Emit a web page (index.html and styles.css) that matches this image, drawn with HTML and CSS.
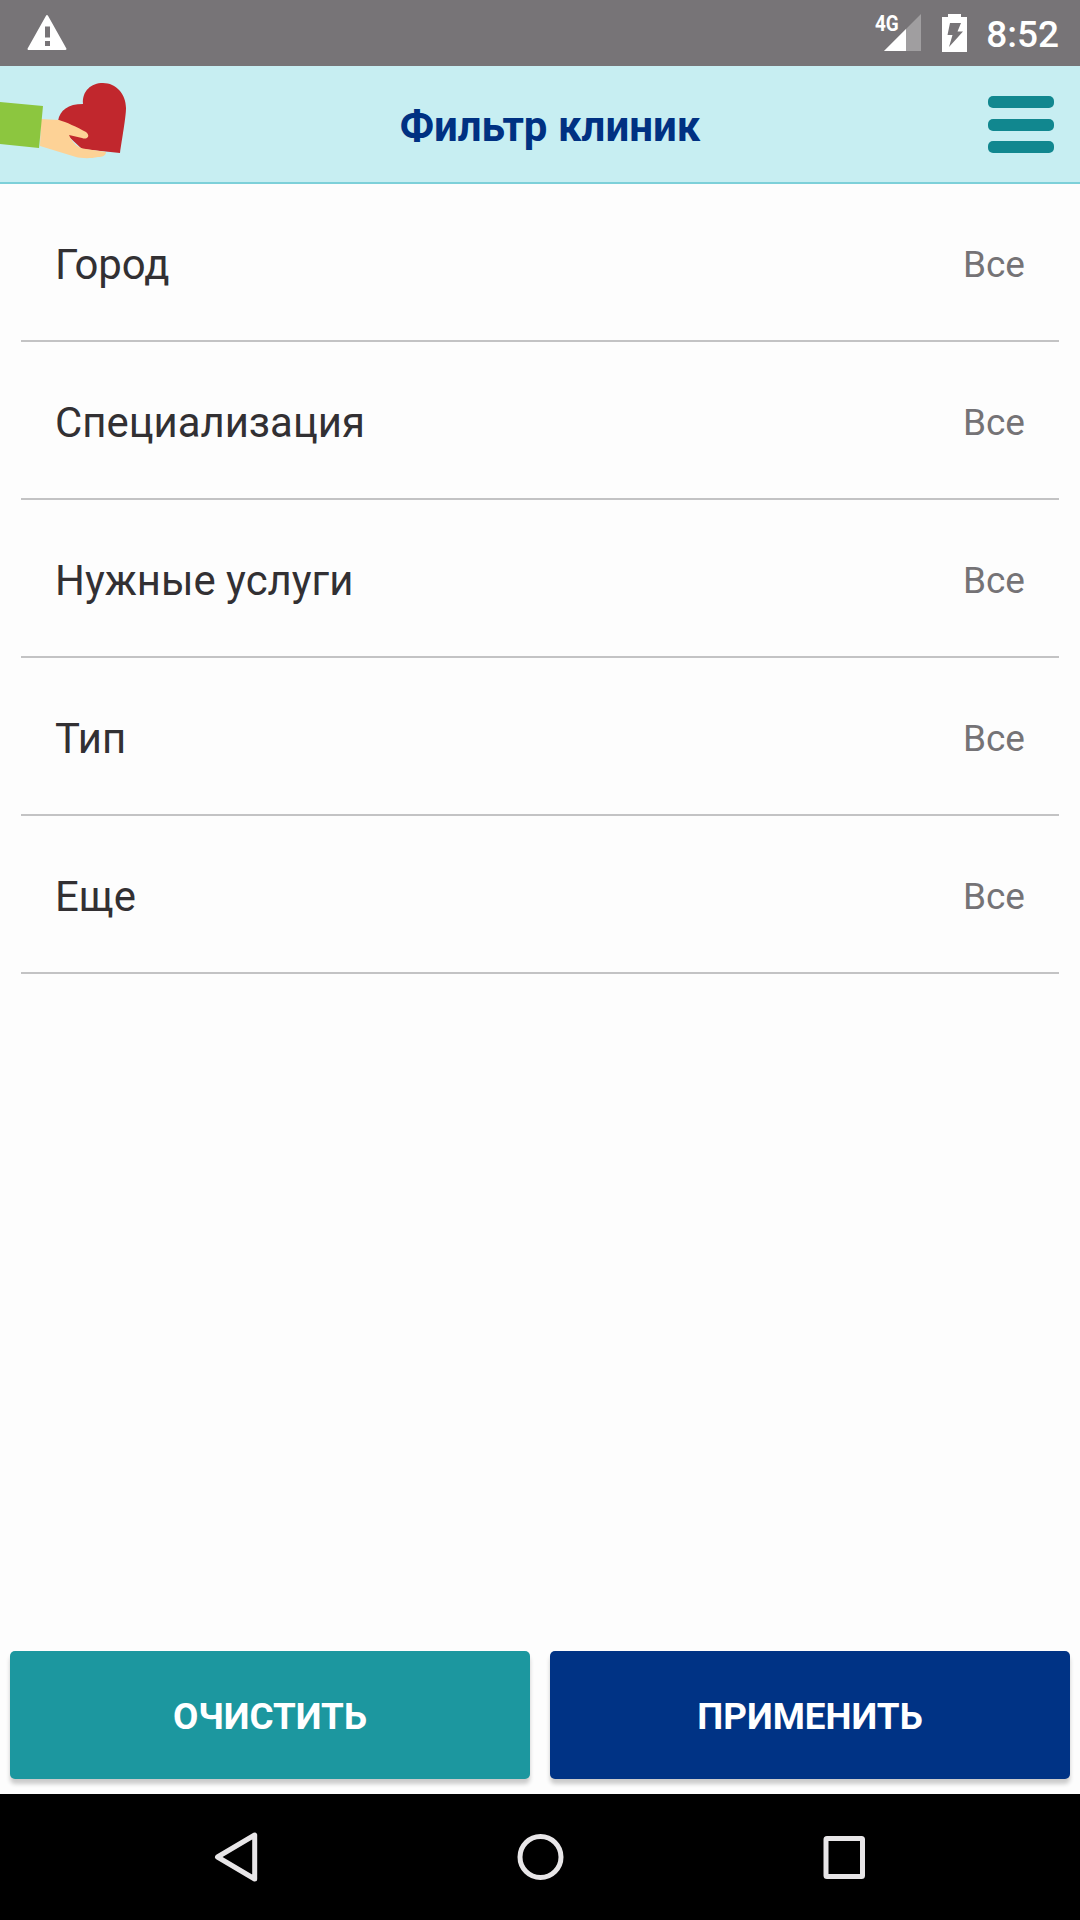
FILE: index.html
```html
<!DOCTYPE html>
<html lang="ru">
<head>
    <meta charset="UTF-8">
    <meta name="viewport" content="width=device-width, initial-scale=1.0">
    <title>Фильтр клиник</title>
    <link rel="stylesheet" href="styles.css">
</head>
<body>
    <div class="screen">
        <div class="status-bar">
            <svg class="status-warning" width="40" height="37" viewBox="0 0 40 37">
                <path d="M20 2L38.500 35H1.500z" fill="#fff" stroke="#fff" stroke-width="2" stroke-linejoin="round"/>
                <path d="M18 12.500h5v11h-5zM18 27h5v5h-5z" fill="#777477"/>
            </svg>
            <div class="status-icons">
                <span class="network">4G</span>
                <svg class="signal" width="37" height="37" viewBox="0 0 37 37">
                    <path d="M37 0V37H0z" fill="#a09ea0"/>
                    <path d="M22 15V37H0z" fill="#fff"/>
                </svg>
                <svg class="battery" width="25" height="38" viewBox="0 0 25 38">
                    <path d="M6 0h13v3h6v35H0V3h6z" fill="#fff"/>
                    <path d="M8 9h11l-3.500 8.500H21L7 33l3.500-12H5.500z" fill="#777477"/>
                </svg>
                <span class="clock">8:52</span>
            </div>
        </div>

        <header class="header">
            <svg class="logo" width="130" height="80" viewBox="0 0 130 80">
                <path d="M58 38C60 27 68 21 83 21C82 8 91 0 103 0C116 0 126 11 126 25C126 34 122 56 120 70L82 66L67 52z" fill="#c1272d"/>
                <path d="M41 36L59 37C66 39 77 44 86 49C91 53 87 57 82 55L69 52C73 61 78 65 86 66L106 69C106 73 102 74 98 74C89 76 80 75 76 74L40 63z" fill="#fdd296"/>
                <path d="M0 19L43 23L39 65L0 61z" fill="#8cc63f"/>
            </svg>
            <h1>Фильтр клиник</h1>
            <div class="menu-button">
                <span></span>
                <span></span>
                <span></span>
            </div>
        </header>

        <main class="filters">
            <div class="filter-row">
                <span class="filter-name">Город</span>
                <span class="filter-value">Все</span>
            </div>
            <div class="filter-row">
                <span class="filter-name">Специализация</span>
                <span class="filter-value">Все</span>
            </div>
            <div class="filter-row">
                <span class="filter-name">Нужные услуги</span>
                <span class="filter-value">Все</span>
            </div>
            <div class="filter-row">
                <span class="filter-name">Тип</span>
                <span class="filter-value">Все</span>
            </div>
            <div class="filter-row">
                <span class="filter-name">Еще</span>
                <span class="filter-value">Все</span>
            </div>
        </main>

        <div class="actions">
            <button class="button clear-button">ОЧИСТИТЬ</button>
            <button class="button apply-button">ПРИМЕНИТЬ</button>
        </div>

        <nav class="nav-bar">
            <svg width="50" height="56" viewBox="0 0 50 56">
                <path d="M42.700 6V50L5.500 28z" fill="none" stroke="#e8e6e8" stroke-width="5" stroke-linejoin="round"/>
            </svg>
            <svg width="50" height="56" viewBox="0 0 50 56">
                <circle cx="24.500" cy="28" r="20.500" fill="none" stroke="#e8e6e8" stroke-width="5"/>
            </svg>
            <svg width="50" height="56" viewBox="0 0 50 56">
                <rect x="6" y="9.500" width="36.500" height="38" rx="1" fill="none" stroke="#e8e6e8" stroke-width="5"/>
            </svg>
        </nav>
    </div>
</body>
</html>
```
FILE: styles.css
```css
* {
    margin: 0;
    padding: 0;
    box-sizing: border-box;
}

body {
    background: #fdfdfd;
    font-family: Roboto, sans-serif;
}

.screen {
    width: 1080px;
    height: 1920px;
    display: flex;
    flex-direction: column;
    overflow: hidden;
}

/* Статус-бар */
.status-bar {
    height: 66px;
    background: #777477;
    color: #fff;
    display: flex;
    justify-content: space-between;
    padding: 14px 21px 0 27px;
}

.status-icons {
    display: flex;
    align-items: flex-start;
}

.network {
    font-size: 22px;
    line-height: 20px;
    font-weight: 700;
    transform: scaleX(0.86);
}

.signal {
    margin-left: -16px;
}

.battery {
    margin-left: 21px;
}

.clock {
    margin-left: 19px;
    font-size: 37px;
    line-height: 42px;
    font-weight: 500;
}

/* Шапка */
.header {
    height: 118px;
    background: #c7eef2;
    border-bottom: 2px solid #7dd0d9;
    display: grid;
    grid-template-columns: 180px 1fr 160px;
    align-items: center;
}

.logo {
    margin-bottom: 3px;
}

.header h1 {
    color: #003182;
    font-size: 42px;
    line-height: 48px;
    font-weight: 700;
    text-align: center;
    white-space: nowrap;
    padding-top: 6px;
}

.menu-button {
    width: 66px;
    display: flex;
    flex-direction: column;
    gap: 10.5px;
    justify-self: end;
    margin-right: 26px;
    padding-top: 1px;
}

.menu-button span {
    height: 12px;
    border-radius: 5px;
    background: #11878f;
}

/* Список фильтров */
.filters {
    flex: 1;
    padding: 0 21px;
}

.filter-row {
    height: 158px;
    border-bottom: 2px solid #c3c3c4;
    display: flex;
    justify-content: space-between;
    align-items: center;
    padding: 4px 34px 0;
}

.filter-name {
    color: #323033;
    font-size: 41.9px;
}

.filter-value {
    color: #757376;
    font-size: 37px;
}

/* Кнопки */
.actions {
    display: flex;
    gap: 20px;
    padding: 0 10px 15px;
}

.button {
    flex: 1;
    height: 128px;
    border: none;
    border-radius: 5px;
    padding-top: 2px;
    color: #fff;
    font-family: inherit;
    font-size: 36.75px;
    font-weight: 700;
    box-shadow: 0 5px 4px rgba(0, 0, 0, 0.2);
}

.clear-button {
    background: #1c979f;
}

.apply-button {
    background: #003385;
}

/* Системная навигация */
.nav-bar {
    height: 126px;
    background: #000;
    display: flex;
    justify-content: space-between;
    align-items: center;
    padding: 0 210px 0 212px;
}
```
